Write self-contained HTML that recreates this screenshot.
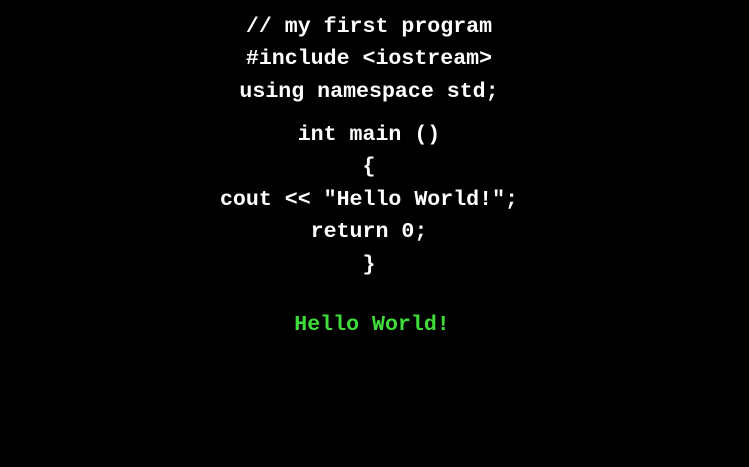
<!DOCTYPE html>
<html><head><meta charset="utf-8"><style>
html,body{margin:0;padding:0;background:#000;width:749px;height:467px;overflow:hidden}
.l{position:absolute;left:0;width:738px;text-align:center;font-family:"Liberation Mono","DejaVu Sans Mono",monospace;font-weight:bold;font-size:21.6px;line-height:24px;color:#fff;white-space:pre}
</style></head><body>
<div class="l" style="top:15px">// my first program</div>
<div class="l" style="top:47px">#include &lt;iostream&gt;</div>
<div class="l" style="top:80px">using namespace std;</div>
<div class="l" style="top:123px">int main ()</div>
<div class="l" style="top:155px">{</div>
<div class="l" style="top:188px">cout &lt;&lt; "Hello World!";</div>
<div class="l" style="top:220px">return 0;</div>
<div class="l" style="top:253px">}</div>
<div class="l" style="top:313px;left:3px;color:#3fdc3a">Hello World!</div>
</body></html>
